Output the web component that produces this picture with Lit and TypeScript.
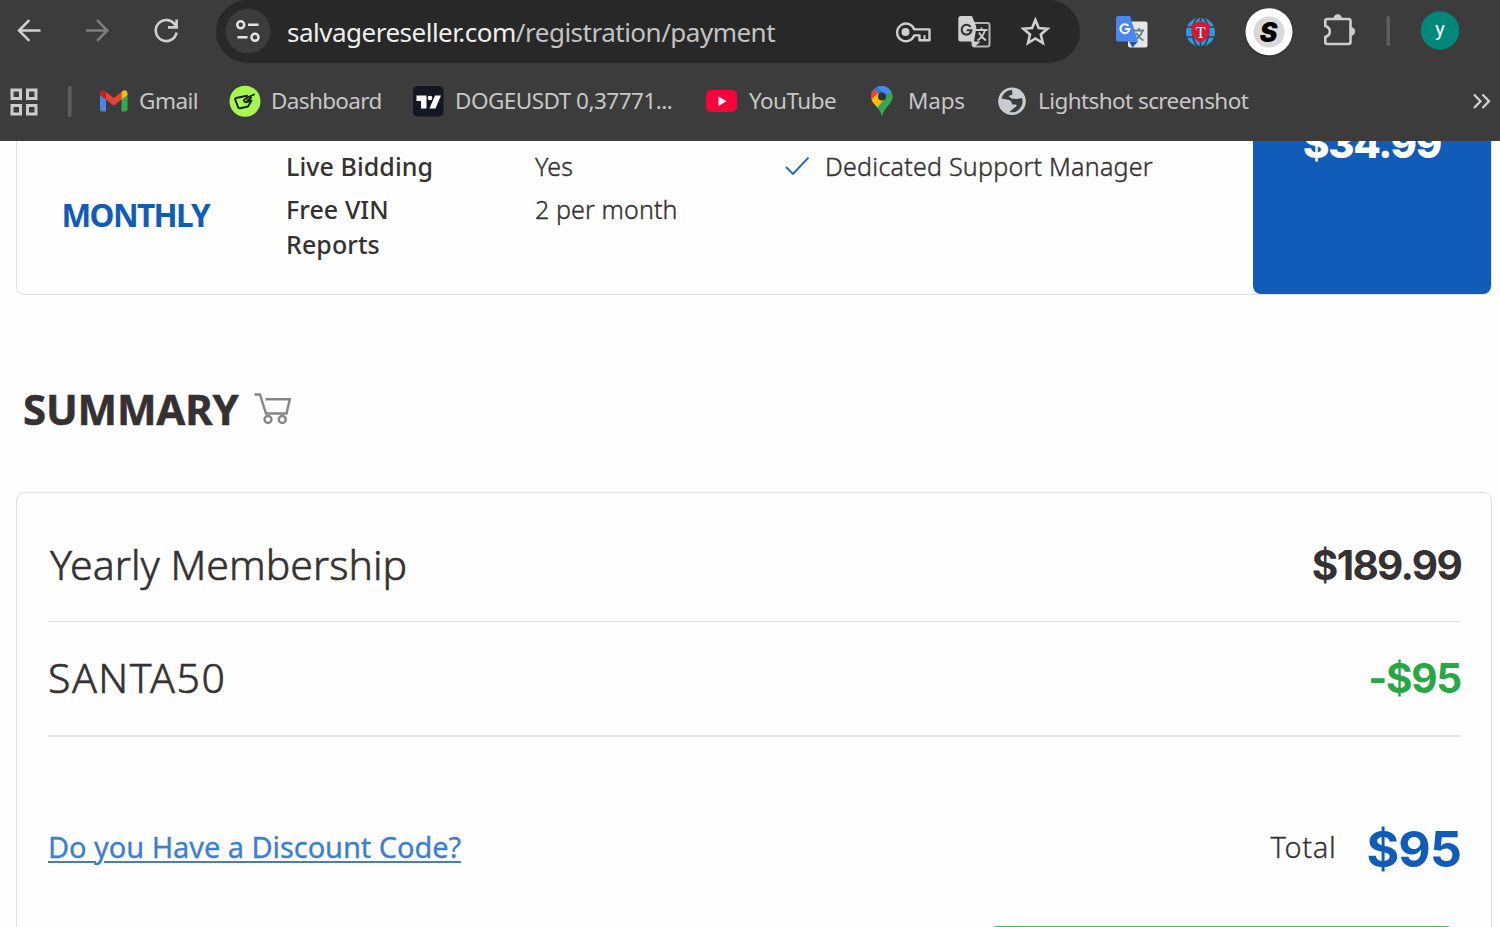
import { LitElement, html, css, svg } from "lit";
import { customElement } from "lit/decorators.js";

const icon = (x: number, y: number, w: number, h: number, body: unknown) =>
  html`<svg width=${w} height=${h} viewBox="${x} ${y} ${w} ${h}" aria-hidden="true">${body}</svg>`;

@customElement("browser-toolbar")
export class BrowserToolbar extends LitElement {
  static styles = css`
    :host { display: flex; height: 63px; background: #3c3c3c; color: #c9c9c9; font-family: "Noto Sans", sans-serif; }
    svg { display: block; flex: none; }
    .pill { display: flex; width: 864px; height: 63px; background: #282828; border-radius: 31.5px; }
    .url { flex: 1; padding-left: 1px; font-size: 26px; line-height: 64px; letter-spacing: -0.5px; white-space: nowrap; color: #c3c3c3; }
    .domain { color: #efefef; }
  `;
  render() {
    return html`
      ${icon(0, 0, 63, 63, svg`<path d="M40.500 30.5H19M29.300 20.200L19 30.5L29.300 40.800" fill="none" stroke="#d0d0d0" stroke-width="2.5"/>`)}
      ${icon(63, 0, 68, 63, svg`<path d="M86 30.5H107M97 20.200L107.3 30.5L97 40.800" fill="none" stroke="#7e7e7e" stroke-width="2.5"/>`)}
      ${icon(131, 0, 85, 63, svg`<path d="M175.500 25.5A10.500 10.500 0 1 0 176.600 32.5M176.6 19.500V27.4H168" fill="none" stroke="#d0d0d0" stroke-width="2.6"/>`)}
      <div class="pill">
        ${icon(216, 0, 70, 63, svg`
          <circle cx="248" cy="31" r="22.5" fill="#3c3c3c"/>
          <g fill="none" stroke="#e4e4e4" stroke-width="2.5"><circle cx="240.7" cy="24.8" r="3.5"/><circle cx="255" cy="37.3" r="3.5"/><path d="M248 24.8H258.5M237.5 37.3H247.5"/></g>`)}
        <div class="url"><span class="domain">salvagereseller.com</span>/registration/payment</div>
        ${icon(880, 0, 65, 63, svg`
          <path d="M914.2 29.4A8.8 8.8 0 1 0 914.2 35.4H919.5V40.3H929.5V29.4Z" fill="none" stroke="#cecece" stroke-width="2.4" stroke-linejoin="round"/>
          <circle cx="905.5" cy="32" r="4" fill="#cecece"/><path d="M924.5 35V40" stroke="#cecece" stroke-width="2"/>`)}
        ${icon(945, 0, 60, 63, svg`
          <rect x="972.5" y="23" width="17" height="23.5" rx="2" fill="#2b2b2b" stroke="#b5b5b5" stroke-width="2"/>
          <path d="M960.5 16H972L982 41L974 47L971.5 41.5H960.5Q958.3 41.5 958.3 39V18.5Q958.3 16 960.5 16Z" fill="#d0d0d0"/>
          <path d="M970.6 27A4.9 4.9 0 1 0 971.4 30.2H966.7" fill="none" stroke="#303030" stroke-width="2.1"/>
          <path d="M977 24L983.500 41L976 45.500L974 41.500" fill="#2b2b2b"/>
          <path d="M960.5 16H972L981 40.500L975 46L971.5 41.5H960.5" fill="none"/>
          <path d="M972 41.500H980.500L974.500 46.800Z" fill="#d0d0d0"/>
          <path d="M976 30H987.5M981.5 27.5V30M985 30Q983 37 977.5 40.5M979 32.5Q981.5 37.5 986 40.5" fill="none" stroke="#cecece" stroke-width="1.8"/>`)}
        ${icon(1005, 0, 75, 63, svg`<path d="M1035.4 20L1038.7 28L1047.4 28.8L1040.8 34.5L1042.8 43L1035.4 38.5L1028 43L1030 34.5L1023.4 28.8L1032.1 28Z" fill="none" stroke="#d0d0d0" stroke-width="2.6"/>`)}
      </div>
      ${icon(1080, 0, 85, 63, svg`
        <rect x="1128" y="21.5" width="19.5" height="26" rx="2" fill="#e6e6e6"/>
        <path d="M1134 30.5H1144M1139 28V30.5M1142.5 30.5Q1141 36.5 1134.5 40M1136 33Q1139 38 1143.5 40.5" fill="none" stroke="#5d8088" stroke-width="1.8"/>
        <path d="M1129 41.5H1138L1132.5 47.5Z" fill="#2451b5"/>
        <path d="M1118.3 16H1130L1138 41.5H1118.3Q1116 41.5 1116 39V18.3Q1116 16 1118.3 16Z" fill="#4b86ee"/>
        <path d="M1128.5 26A4.5 4.5 0 1 0 1129.4 29H1125" fill="none" stroke="#fff" stroke-width="2"/>`)}
      ${icon(1165, 0, 68, 63, svg`
        <circle cx="1200.5" cy="32" r="14.500" fill="#2a9be8"/>
        <g fill="none" stroke="#3c3c3c" stroke-width="1.700"><path d="M1200.500 17V47M1186 27H1215M1186 37H1215"/><ellipse cx="1200.500" cy="32" rx="8" ry="15"/></g>
        <path d="M1200.5 21L1209.5 24V33Q1208.5 39 1200.5 42.500Q1192.500 39 1191.500 33V24Z" fill="#cf1c31"/>
        <text x="1200.6" y="37.500" text-anchor="middle" font-family="Liberation Serif, serif" font-size="16" fill="#fff">T</text>`)}
      ${icon(1233, 0, 71, 63, svg`
        <circle cx="1269" cy="33" r="24" fill="#2c2c2c" opacity=".5"/>
        <circle cx="1269" cy="31.700" r="23.500" fill="#fff"/><circle cx="1269" cy="32" r="15.500" fill="#d8d8d8"/>
        <text x="1268.500" y="41.500" text-anchor="middle" font-family="Inter, sans-serif" font-size="26.500" font-weight="900" font-style="italic" fill="#000">S</text>`)}
      ${icon(1304, 0, 66, 63, svg`
        <path d="M1327.300 19H1348.500Q1350.500 19 1350.500 21V42Q1350.500 44 1348.500 44H1327.300Q1325.300 44 1325.300 42V37Q1329.800 35.500 1329.800 31.500T1325.300 26V21Q1325.300 19 1327.300 19Z" fill="none" stroke="#cecece" stroke-width="2.600"/>
        <path d="M1333.500 18.500A4.200 4.200 0 0 1 1341.900 18.500ZM1351 27.300A4.200 4.200 0 0 1 1351 35.700Z" fill="#cecece"/>`)}
      ${icon(1370, 0, 34, 63, svg`<rect x="1386.500" y="16" width="3.500" height="30" rx="1.500" fill="#5e5e5e"/>`)}
      ${icon(1404, 0, 96, 63, svg`<circle cx="1440" cy="30.500" r="19.200" fill="#00897b"/><text x="1440" y="35.500" text-anchor="middle" font-family="Roboto, sans-serif" font-size="21" fill="#fff">y</text>`)}
    `;
  }
}

@customElement("bookmarks-bar")
export class BookmarksBar extends LitElement {
  static styles = css`
    :host { display: grid; grid-template-columns: 85px 54px 83px 49px 134px 50px 243px 50px 115px 45px 82px 48px 426px 36px;
      height: 78px; background: #3c3c3c; color: #c7c7c7; font: 22.5px/75px "Noto Sans", sans-serif; white-space: nowrap; }
    svg { display: block; }
    .gmail { letter-spacing: -0.5px; }
    .dash { letter-spacing: -0.65px; }
    .doge { letter-spacing: -0.52px; }
    .tube { letter-spacing: -0.55px; padding-left: 1px; }
    .maps { letter-spacing: -0.2px; }
    .light { letter-spacing: -0.58px; }
  `;
  render() {
    return html`
      ${icon(0, 63, 85, 78, svg`
        <g fill="none" stroke="#cbcbcb" stroke-width="3"><rect x="12" y="90" width="8.500" height="8.500"/><rect x="27.500" y="90" width="8.500" height="8.500"/><rect x="12" y="105.500" width="8.500" height="8.500"/><rect x="27.500" y="105.500" width="8.500" height="8.500"/></g>
        <rect x="68" y="86" width="3.500" height="31" rx="1.500" fill="#5e5e5e"/>`)}
      ${icon(85, 63, 54, 78, svg`
        <path d="M100 94L106 99V111.500H102Q100 111.500 100 109.500Z" fill="#4a86e8"/>
        <path d="M127.500 94L121.500 99V111.500H125.500Q127.500 111.500 127.500 109.500Z" fill="#34a853"/>
        <path d="M106 92L113.700 98L121.500 92V99.500L113.700 105.500L106 99.500Z" fill="#ea4335"/>
        <path d="M100 95V93.500Q100.500 89.500 104 90.500L106 92V99.500Z" fill="#c5221f"/>
        <path d="M127.500 95V93.500Q127 89.500 123.500 90.500L121.500 92V99.500Z" fill="#fbbc04"/>`)}
      <span class="gmail">Gmail</span>
      ${icon(222, 63, 49, 78, svg`
        <circle cx="245" cy="101.300" r="15.500" fill="#a9f653"/>
        <path d="M247 95.800L236 98Q234.800 98.500 235.200 99.700L238.300 107.500Q239 108.700 240.300 108.300L248 106.500L251.500 100.500L246.500 102.200Q243.500 101.800 244 100L247.500 97.500L254 94.500M247.500 100.500L251 97.800" fill="none" stroke="#14230a" stroke-width="1.900" stroke-linejoin="round" stroke-linecap="round"/>`)}
      <span class="dash">Dashboard</span>
      ${icon(405, 63, 50, 78, svg`
        <rect x="413" y="86" width="30.500" height="30.500" rx="4.500" fill="#131722"/>
        <path d="M416.500 95.500H426.500V108.500H421V101H416.500Z" fill="#fff"/><circle cx="430" cy="98" r="2.300" fill="#fff"/><path d="M435 95.500H441L435.500 108.500H429.500Z" fill="#fff"/>`)}
      <span class="doge">DOGEUSDT 0,37771...</span>
      ${icon(698, 63, 50, 78, svg`<rect x="706" y="90" width="31" height="22" rx="5" fill="#f9033c"/><path d="M718.500 96.500V106L726.500 101.200Z" fill="#fff"/>`)}
      <span class="tube">YouTube</span>
      ${icon(863, 63, 45, 78, svg`
        <clipPath id="pin"><path d="M882 86A10.700 10.700 0 0 1 892.500 96.800C892.500 104 884 107 882 116C880 107 871 104 871 96.800A10.700 10.700 0 0 1 882 86Z"/></clipPath>
        <g clip-path="url(#pin)"><rect x="870" y="85" width="24" height="32" fill="#34a853"/>
          <path d="M870 85H894V91L882 96L874 90Z" fill="#2f74e0"/><path d="M870 86L874 89L882 96L871 107H870Z" fill="#ea4335"/>
          <path d="M870 101L878 93L885 100L875 112L870 108Z" fill="#fbbc04"/><path d="M893 89L876 109V117H894Z" fill="#34a853"/><path d="M876 85H894V89L887 95L882 92Z" fill="#4a8af0"/></g>
        <circle cx="882" cy="96.500" r="4" fill="#2d3440"/>`)}
      <span class="maps">Maps</span>
      ${icon(990, 63, 48, 78, svg`
        <circle cx="1012" cy="101.200" r="13.800" fill="#c9ccd2"/>
        <path d="M1012 90Q1004 90 1001.500 98.500L1009 100Q1012 101 1012 104.500H1016Q1018 106 1014 108L1009.500 112Q1017 113.500 1021 107Q1023.500 103 1022 98L1017 99L1011.500 98.500L1008.500 96L1012.500 94.500Z" fill="#3c3c3c"/>`)}
      <span class="light">Lightshot screenshot</span>
      ${icon(1464, 63, 36, 78, svg`<path d="M1474 94.500L1480.500 101.200L1474 108M1482.500 94.500L1489 101.200L1482.500 108" fill="none" stroke="#d0d0d0" stroke-width="2.300"/>`)}
    `;
  }
}

@customElement("plan-card")
export class PlanCard extends LitElement {
  static styles = css`
    :host { display: grid; grid-template-columns: 269px 249px 249px 469px 238px; box-sizing: border-box; width: 1476px; height: 154px;
      border: 1px solid #e0e0e0; border-top: 0; border-radius: 0 0 8px 8px; font: 25px/35px "Noto Sans", sans-serif; color: #353132; }
    .name { padding: 54px 0 0 44.5px; font-size: 31.5px; line-height: 40px; font-weight: 700; letter-spacing: -1.6px; color: #105cb8; }
    .col { padding-top: 8px; font-weight: 300; letter-spacing: .12px; -webkit-text-stroke: .4px currentColor; }
    .col p { margin: 0 0 8px; }
    .label { font-weight: 500; letter-spacing: .08px; width: 150px; -webkit-text-stroke: 0; }
    .perk { display: flex; letter-spacing: .25px; }
    .perk svg { margin-right: 8px; }
    .price { height: 153px; border-radius: 0 0 8px 8px; background: #105cb8; color: #fff; text-align: center; }
    .price b { display: block; margin-top: -17px; font: 800 40px/40px Inter, sans-serif; letter-spacing: -1.2px; }
  `;
  render() {
    return html`
      <div class="name">MONTHLY</div>
      <div class="col label"><p>Live Bidding</p><p>Free VIN Reports</p></div>
      <div class="col"><p>Yes</p><p>2 per month</p></div>
      <div class="col perk">${icon(784, 149, 33, 35, svg`<path d="M786 167L793 174L808.500 157.500" fill="none" stroke="#1c69c4" stroke-width="1.900"/>`)}<span>Dedicated Support Manager</span></div>
      <div class="price"><b>$34.99</b></div>
    `;
  }
}

@customElement("order-summary")
export class OrderSummary extends LitElement {
  static styles = css`
    :host { display: block; font-family: "Noto Sans", sans-serif; color: #353132; }
    h2 { display: flex; margin: 0 0 53px; padding: 84px 0 0 7px; font-size: 42px; line-height: 60px; font-weight: 700; letter-spacing: -.2px; -webkit-text-stroke: .5px currentColor; }
    .card { box-sizing: border-box; width: 1476px; height: 500px; border: 1px solid #e0e0e0; border-radius: 8px; padding: 0 31px; }
    .row { display: flex; justify-content: space-between; align-items: baseline; box-sizing: border-box; width: 1413px; line-height: 60px; font-size: 41px; font-weight: 300; -webkit-text-stroke: .6px currentColor; }
    .first { height: 129px; padding-top: 41px; border-bottom: 1px solid #e4e4e4; letter-spacing: .05px; }
    .first span { padding-left: 2px; }
    .second { height: 115px; padding-top: 25px; border-bottom: 2px solid #e7e7e7; letter-spacing: 1.5px; }
    .row b { font-family: Inter, sans-serif; font-weight: 700; font-size: 40.5px; letter-spacing: -1.7px; -webkit-text-stroke: 0; }
    .second .off { color: #28a745; letter-spacing: -1.2px; }
    .sum { align-items: center; padding-top: 78.5px; font-size: 29px; -webkit-text-stroke: .3px currentColor; }
    a { color: #3c7fd0; font-weight: 400; letter-spacing: -.06px; text-decoration: underline; text-decoration-thickness: 2px; text-underline-offset: 3px; }
    .total { display: flex; align-items: center; gap: 30px; letter-spacing: .7px; }
    .sum .total b { padding-top: 3px; color: #105cb8; font-size: 50px; letter-spacing: -.9px; }
    .pay { width: 469px; height: 60px; margin: 47.5px 0 0 939px; border-radius: 10px; background: #4fb866; }
  `;
  render() {
    return html`
      <h2>SUMMARY ${icon(239.5, 379, 60, 60, svg`<g fill="none" stroke="#858585" stroke-width="2.400"><path d="M255 394.500H260.500L266.500 413.500H287L290.300 399.300H266"/><circle cx="268.500" cy="419.500" r="3.500"/><circle cx="282.800" cy="419.500" r="3.500"/></g>`)}</h2>
      <div class="card">
        <div class="row first"><span>Yearly Membership</span><b>$189.99</b></div>
        <div class="row second"><span>SANTA50</span><b class="off">-$95</b></div>
        <div class="row sum"><a>Do you Have a Discount Code?</a><div class="total"><span>Total</span><b>$95</b></div></div>
        <div class="pay"></div>
      </div>
    `;
  }
}

@customElement("app-root")
export class AppRoot extends LitElement {
  static styles = css`
    :host { display: block; height: 927px; overflow: hidden; background: #3c3c3c; }
    .page { height: 786px; overflow: hidden; padding-left: 16px; background: #fefefe; }
  `;
  render() {
    return html`<browser-toolbar></browser-toolbar><bookmarks-bar></bookmarks-bar>
      <div class="page"><plan-card></plan-card><order-summary></order-summary></div>`;
  }
}
